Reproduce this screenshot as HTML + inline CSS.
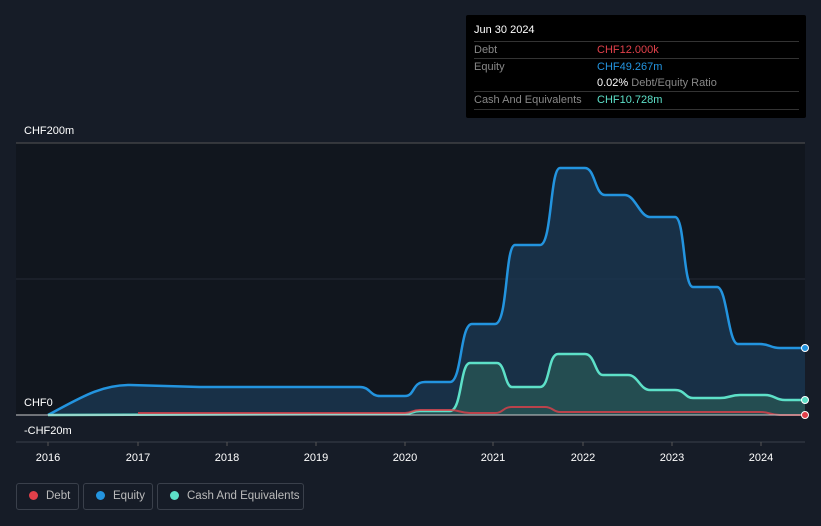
<!DOCTYPE html>
<html><head><style>
html,body{margin:0;width:821px;height:526px;overflow:hidden}
body{background:#161c27;font-family:"Liberation Sans",sans-serif;position:relative}
.t{position:absolute;font-size:11px;color:#fff}
.tip{position:absolute;left:466px;top:15px;width:340px;height:103px;background:#000;border-radius:2px}
.row{position:absolute;left:8px;width:325px;font-size:11px;color:#888;border-top:1px solid #333;height:17px;line-height:17px}
.leg{position:absolute;top:483px;height:27px;border:1px solid #3a404b;border-radius:3px;color:#bbb;font-size:11.5px;line-height:25px;box-sizing:border-box;white-space:nowrap}
.dot{display:inline-block;width:9px;height:9px;border-radius:50%;margin:0 8px 0 12px;vertical-align:-1px}
</style></head><body>
<svg width="821" height="526" style="position:absolute;left:0;top:0">
<rect x="16" y="143" width="789" height="272" fill="#11161e"/>
<line x1="16" y1="143" x2="805" y2="143" stroke="#555" stroke-width="1"/>
<line x1="16" y1="279" x2="805" y2="279" stroke="#252b35" stroke-width="1"/>
<line x1="16" y1="442" x2="805" y2="442" stroke="#3a404b" stroke-width="1"/>
<path d="M48,415 C80,398 100,385 130,385 L200,387 L360,387 C370,387 370,396 380,396 L405,396 C415,396 412,382 425,382 L450,382 C462,382 460,324 472,324 L495,324 C508,324 505,245 515,245 L540,245 C552,245 550,168 560,168 L585,168 C595,168 595,195 605,195 L625,195 C635,195 640,217 650,217 L675,217 C685,217 683,287 693,287 L717,287 C727,287 728,344 738,344 L760,344 C770,344 770,348 780,348 L805,348 L805,415 Z" fill="#1b3a55" opacity="0.75"/>
<path d="M48,415 L405,414 C412,414 412,411 420,411 L450,411 C462,411 460,363 470,363 L497,363 C505,363 505,387 512,387 L540,387 C550,387 548,354 558,354 L585,354 C595,354 595,375 603,375 L628,375 C638,375 640,390 650,390 L675,390 C685,390 685,398 693,398 L720,398 C730,398 730,395 740,395 L765,395 C775,395 775,400 785,400 L805,400 L805,415 Z" fill="#2a5a55" opacity="0.7"/>
<path d="M48,415 C80,398 100,385 130,385 L200,387 L360,387 C370,387 370,396 380,396 L405,396 C415,396 412,382 425,382 L450,382 C462,382 460,324 472,324 L495,324 C508,324 505,245 515,245 L540,245 C552,245 550,168 560,168 L585,168 C595,168 595,195 605,195 L625,195 C635,195 640,217 650,217 L675,217 C685,217 683,287 693,287 L717,287 C727,287 728,344 738,344 L760,344 C770,344 770,348 780,348 L805,348" fill="none" stroke="#2394df" stroke-width="2.5"/>
<path d="M48,415 L405,414 C412,414 412,411 420,411 L450,411 C462,411 460,363 470,363 L497,363 C505,363 505,387 512,387 L540,387 C550,387 548,354 558,354 L585,354 C595,354 595,375 603,375 L628,375 C638,375 640,390 650,390 L675,390 C685,390 685,398 693,398 L720,398 C730,398 730,395 740,395 L765,395 C775,395 775,400 785,400 L805,400" fill="none" stroke="#5de0c8" stroke-width="2.5"/>
<path d="M138,413 L405,413 C412,413 412,410 420,410 L450,410 C460,410 460,413 470,413 L495,413 C503,413 503,407 512,407 L545,407 C553,407 553,412 560,412 L760,412 C770,412 770,415 780,415 L805,415" fill="none" stroke="#e0404a" stroke-width="2" opacity="0.8"/>
<line x1="16" y1="415" x2="805" y2="415" stroke="#ccc" stroke-width="1"/>
<circle cx="805" cy="348" r="3.5" fill="#2394df" stroke="#fff" stroke-width="1"/>
<circle cx="805" cy="400" r="3.5" fill="#5de0c8" stroke="#fff" stroke-width="1"/>
<circle cx="805" cy="415" r="3.5" fill="#e0404a" stroke="#fff" stroke-width="1"/>
<g stroke="#555"><line x1="48" y1="442" x2="48" y2="446"/><line x1="138" y1="442" x2="138" y2="446"/><line x1="227" y1="442" x2="227" y2="446"/><line x1="316" y1="442" x2="316" y2="446"/><line x1="405" y1="442" x2="405" y2="446"/><line x1="493" y1="442" x2="493" y2="446"/><line x1="583" y1="442" x2="583" y2="446"/><line x1="672" y1="442" x2="672" y2="446"/><line x1="761" y1="442" x2="761" y2="446"/></g>
<g fill="#fff" font-size="11" text-anchor="middle" font-family="Liberation Sans"><text x="48" y="461">2016</text><text x="138" y="461">2017</text><text x="227" y="461">2018</text><text x="316" y="461">2019</text><text x="405" y="461">2020</text><text x="493" y="461">2021</text><text x="583" y="461">2022</text><text x="672" y="461">2023</text><text x="761" y="461">2024</text></g>
</svg>
<div class="t" style="left:24px;top:125px">CHF200m</div>
<div class="t" style="left:24px;top:397px">CHF0</div>
<div class="t" style="left:24px;top:425px">-CHF20m</div>
<div class="tip">
<div style="position:absolute;left:8px;top:9px;font-size:11px;color:#fff">Jun 30 2024</div>
<div class="row" style="top:26px">Debt<span style="position:absolute;left:123px;color:#e0404a">CHF12.000k</span></div>
<div class="row" style="top:43px">Equity<span style="position:absolute;left:123px;color:#2394df">CHF49.267m</span></div>
<div class="row" style="top:60px;border-top:none"><span style="position:absolute;left:123px"><b style="color:#fff;font-weight:normal">0.02%</b> Debt/Equity Ratio</span></div>
<div class="row" style="top:76px;border-bottom:1px solid #333">Cash And Equivalents<span style="position:absolute;left:123px;color:#5de0c8">CHF10.728m</span></div>
</div>
<div class="leg" style="left:16px;width:63px"><span class="dot" style="background:#e0404a"></span>Debt</div>
<div class="leg" style="left:83px;width:70px"><span class="dot" style="background:#2394df"></span>Equity</div>
<div class="leg" style="left:157px;width:147px"><span class="dot" style="background:#5de0c8"></span>Cash And Equivalents</div>
</body></html>
